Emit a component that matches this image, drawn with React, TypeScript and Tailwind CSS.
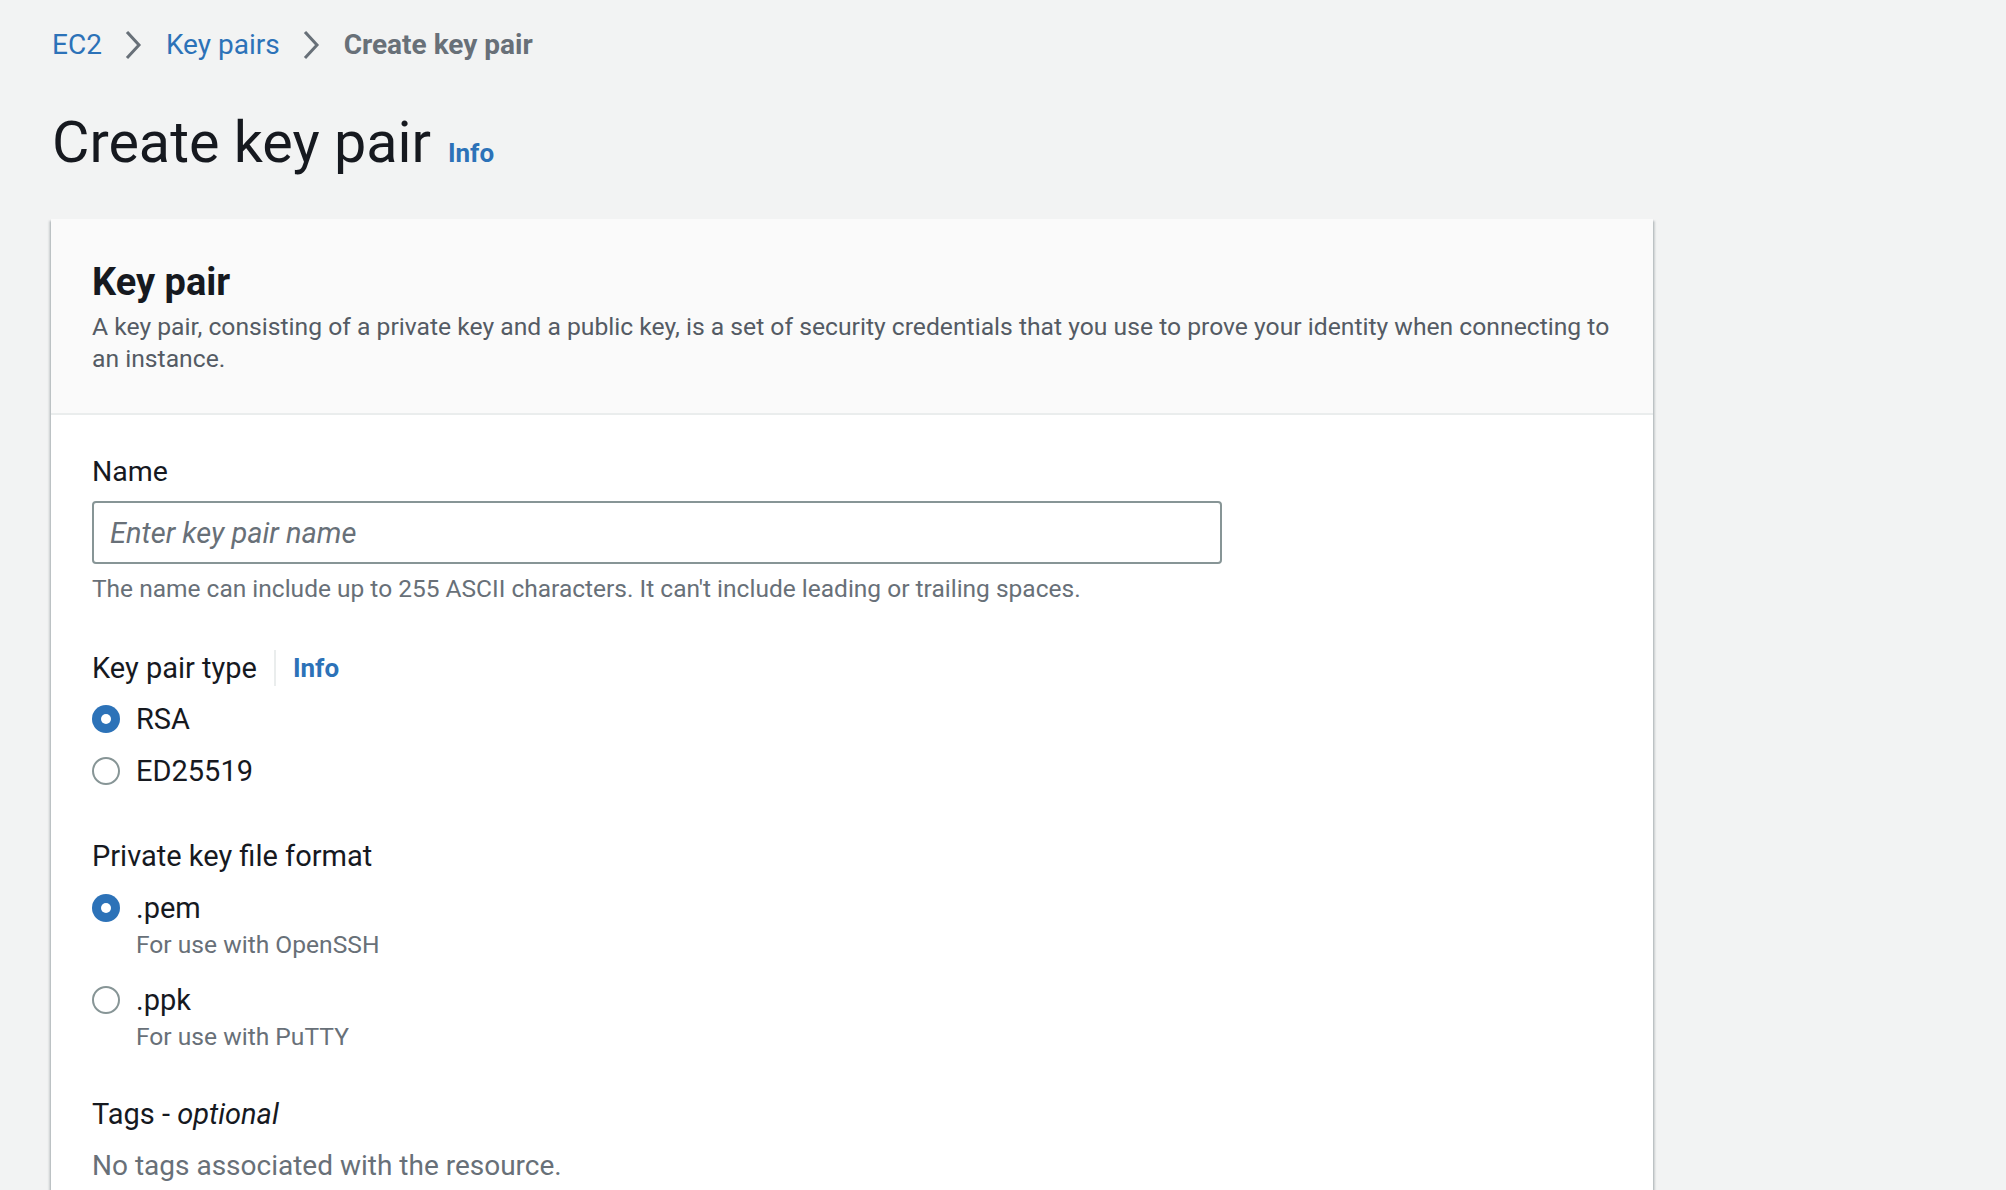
import React, { useState } from 'react'

function Chevron() {
  return (
    <svg width="18" height="30" viewBox="0 0 18 30" fill="none" className="shrink-0">
      <path d="M3 3 L14 15 L3 27" stroke="#687078" strokeWidth="3" strokeLinecap="square" />
    </svg>
  )
}

function Radio({ checked }: { checked: boolean }) {
  return checked ? (
    <span className="flex h-[28px] w-[28px] shrink-0 items-center justify-center rounded-full bg-[#2c72b8]">
      <span className="h-[10px] w-[10px] rounded-full bg-white" />
    </span>
  ) : (
    <span className="h-[28px] w-[28px] shrink-0 rounded-full border-2 border-[#879596] bg-white" />
  )
}

type Option = { value: string; label: string; desc?: string }

function RadioGroup({
  options,
  value,
  onChange,
  className,
}: {
  options: Option[]
  value: string
  onChange: (v: string) => void
  className?: string
}) {
  return (
    <div className={className}>
      {options.map((o) => (
        <div
          key={o.value}
          className={`cursor-pointer first:mt-0 ${o.desc ? 'mt-[23px]' : 'mt-[20px]'}`}
          onClick={() => onChange(o.value)}>
          <div className="flex items-center gap-[16px] h-[32px]">
            <Radio checked={value === o.value} />
            <span className="text-[29px] leading-[32px] text-[#16191f]">{o.label}</span>
          </div>
          {o.desc && (
            <div className="mt-[5px] pl-[44px] text-[24.6px] leading-[32px] text-[#687078]">{o.desc}</div>
          )}
        </div>
      ))}
    </div>
  )
}

export default function App() {
  const [type, setType] = useState('rsa')
  const [format, setFormat] = useState('pem')
  const [name, setName] = useState('')

  return (
    <div className="min-h-[1190px] bg-[#f2f3f3] pl-[51px] pt-[29px] font-['Roboto',_'Liberation_Sans',_sans-serif] text-[#16191f] overflow-hidden">
      {/* breadcrumbs */}
      <nav className="flex items-center gap-[23px] h-[32px] text-[28px] leading-[32px] pl-[1px]">
        <a className="text-[#2c72b8]">EC2</a>
        <Chevron />
        <a className="text-[#2c72b8]">Key pairs</a>
        <Chevron />
        <span className="font-bold text-[#687078]">Create key pair</span>
      </nav>

      <div className="mt-[50px] flex items-baseline gap-[17px] pl-[1px]">
        <h1 className="text-[57.5px] leading-[64px] font-normal text-[#16191f]">Create key pair</h1>
        <a className="text-[26px] font-bold text-[#2c72b8]">Info</a>
      </div>

      <div className="mt-[44px] w-[1602px] bg-white shadow-[0_2px_2px_0_rgba(0,28,36,0.3),2px_2px_2px_0_rgba(0,28,36,0.15),-2px_2px_2px_0_rgba(0,28,36,0.15)]">
        <div className="bg-[#fafafa] px-[41px] pt-[41px] pb-[38px] border-b-2 border-[#eaeded]">
          <h2 className="text-[38px] leading-[44px] font-bold">Key pair</h2>
          <p className="mt-[7px] text-[24.7px] leading-[32px] text-[#545b64]">
            A key pair, consisting of a private key and a public key, is a set of security credentials that you use to prove your identity when connecting to an instance.
          </p>
        </div>

        <div className="px-[41px] pt-[41px] pb-[60px]">
          <label className="block text-[28.5px] leading-[32px]">Name</label>
          <input
            value={name}
            onChange={(e) => setName(e.target.value)}
            placeholder="Enter key pair name"
            className="mt-[13px] block h-[63px] w-[1130px] rounded-[4px] border-2 border-[#879596] px-[16px] text-[29px] outline-none placeholder:italic placeholder:text-[#687078]"
          />
          <p className="mt-[9px] text-[24.5px] leading-[32px] text-[#687078]">
            The name can include up to 255 ASCII characters. It can&apos;t include leading or trailing spaces.
          </p>

          <div className="mt-[47px] flex items-center h-[32px]">
            <span className="text-[29px] leading-[32px]">Key pair type</span>
            <span className="mx-[17px] h-[36px] w-[2px] bg-[#eaeded]" />
            <a className="text-[26px] font-bold text-[#2c72b8]">Info</a>
          </div>
          <RadioGroup
            className="mt-[19px]"
            value={type}
            onChange={setType}
            options={[
              { value: 'rsa', label: 'RSA' },
              { value: 'ed', label: 'ED25519' },
            ]}
          />

          <div className="mt-[53px] text-[29px] leading-[32px]">Private key file format</div>
          <RadioGroup
            className="mt-[20px]"
            value={format}
            onChange={setFormat}
            options={[
              { value: 'pem', label: '.pem', desc: 'For use with OpenSSH' },
              { value: 'ppk', label: '.ppk', desc: 'For use with PuTTY' },
            ]}
          />

          <div className="mt-[45px] text-[29px] leading-[32px]">
            Tags - <i>optional</i>
          </div>
          <p className="mt-[20px] text-[28px] leading-[32px] text-[#687078]">No tags associated with the resource.</p>
        </div>
      </div>
    </div>
  )
}
